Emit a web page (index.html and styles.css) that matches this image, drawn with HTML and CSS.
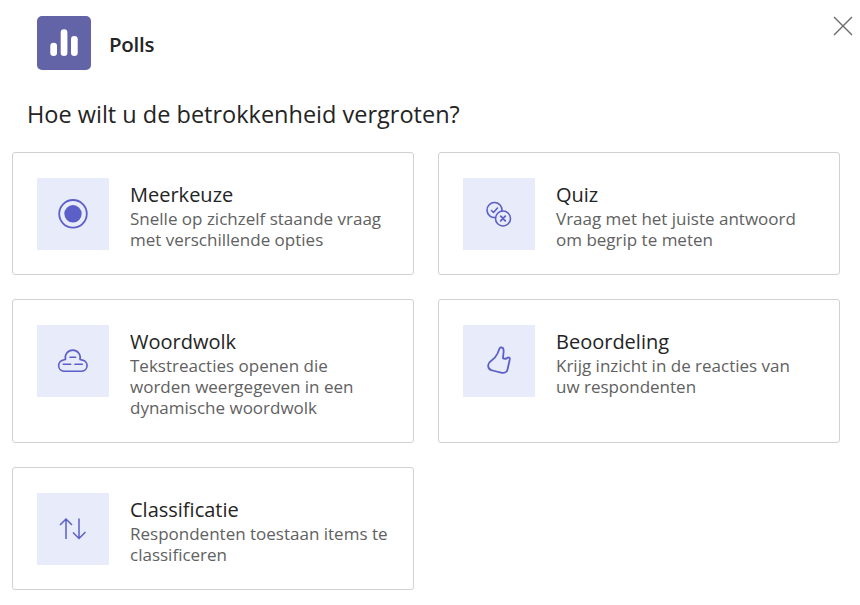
FILE: index.html
```html
<!DOCTYPE html>
<html lang="nl">
<head>
<meta charset="utf-8">
<title>Polls</title>
<link rel="stylesheet" href="styles.css">
</head>
<body>
<main class="dialog">
  <button class="close" aria-label="Sluiten">
    <svg width="20" height="20" viewBox="0 0 20 20"><path d="M1 1 19 19M19 1 1 19" stroke="#6b6b6b" stroke-width="1.4" fill="none"/></svg>
  </button>
  <header class="app">
    <div class="app-logo">
      <svg width="54" height="54" viewBox="0 0 54 54"><g fill="#fff"><rect x="13.300" y="26.700" width="6.700" height="13.300" rx="3.300"/><rect x="23.700" y="13.300" width="6.700" height="26.700" rx="3.300"/><rect x="34" y="20" width="6.700" height="20" rx="3.300"/></g></svg>
    </div>
    <span class="app-name">Polls</span>
  </header>
  <h1 class="heading">Hoe wilt u de betrokkenheid vergroten?</h1>
  <div class="grid">
    <article class="card">
      <div class="tile"><svg width="32" height="32" viewBox="0 0 32 32"><circle cx="16" cy="15.800" r="13.800" fill="none" stroke="#5b5fc7" stroke-width="1.800"/><circle cx="16" cy="15.800" r="8.700" fill="#5b5fc7"/></svg></div>
      <div class="copy"><h2 class="title">Meerkeuze</h2><p class="desc">Snelle op zichzelf staande vraag met verschillende opties</p></div>
    </article>
    <article class="card">
      <div class="tile"><svg width="32" height="32" viewBox="0 0 32 32" fill="none" stroke="#5b5fc7" stroke-width="1.600" stroke-linecap="round" stroke-linejoin="round"><path d="M12.570 19.430A7.500 7.500 0 1 1 18.930 13.070"/><path d="M8.500 12.500l2 2 4-4.500"/><circle cx="20" cy="20.500" r="7.500"/><path d="M17.700 18.200l4.600 4.600M22.300 18.200l-4.600 4.600" stroke-width="1.800"/></svg></div>
      <div class="copy"><h2 class="title">Quiz</h2><p class="desc">Vraag met het juiste antwoord om begrip te meten</p></div>
    </article>
    <article class="card">
      <div class="tile"><svg width="32" height="32" viewBox="0 0 32 32" fill="none" stroke="#5b5fc7" stroke-width="1.600" stroke-linecap="round" stroke-linejoin="round"><path d="M7 26.200H24.700a5.600 5.600 0 0 0 .800-11.100L23 14.500A7.500 7.500 0 1 0 8.500 14.500L6.200 15.100a5.600 5.600 0 0 0 .800 11.100Z"/><path d="M13 12.300h5.700M6.300 19.300h7.400M18 19.300h7.300"/></svg></div>
      <div class="copy"><h2 class="title">Woordwolk</h2><p class="desc">Tekstreacties openen die worden weergegeven in een dynamische woordwolk</p></div>
    </article>
    <article class="card">
      <div class="tile"><svg width="32" height="32" viewBox="0 0 32 32" fill="none" stroke="#5b5fc7" stroke-width="1.800" stroke-linecap="round" stroke-linejoin="round"><path d="M16.500 3.500C17.500 2 20 2 20.500 4.500C21 7 20 10 20 13.500C22 14 24 13.500 25 12.500C26 12 27 13 26.800 14.200L24.500 24.500C24 27 21.500 28.300 19 27.800L9.500 25.500C6.500 24.800 5 22.500 5.200 20C5.400 18 6.500 17 8 16C11 14 13 12 14.500 8.500Z"/></svg></div>
      <div class="copy"><h2 class="title">Beoordeling</h2><p class="desc">Krijg inzicht in de reacties van uw respondenten</p></div>
    </article>
    <article class="card">
      <div class="tile"><svg width="32" height="32" viewBox="0 0 32 32" fill="none" stroke="#5b5fc7" stroke-width="1.500"><path d="M9 26V6M3 12l6-6 6 6M22 5.500v20M16 19.500l6 6 6.500-6.500"/></svg></div>
      <div class="copy"><h2 class="title">Classificatie</h2><p class="desc">Respondenten toestaan items te classificeren</p></div>
    </article>
  </div>
</main>
</body>
</html>
```
FILE: styles.css
```css
* { box-sizing: border-box; }
html, body { margin: 0; padding: 0; }
body {
  width: 860px;
  height: 605px;
  overflow: hidden;
  background: #fff;
  color: #242424;
  font-family: "Open Sans", "Noto Sans", sans-serif;
}
.dialog { position: relative; padding: 16px 20px 0 12px; }
.close {
  position: absolute;
  top: 16px;
  right: 7px;
  width: 20px;
  height: 20px;
  padding: 0;
  border: 0;
  background: none;
  display: block;
}
.close svg { display: block; }
.app { display: flex; align-items: center; gap: 18px; padding-left: 25px; }
.app-logo {
  width: 54px;
  height: 54px;
  border-radius: 5px;
  background: #6264a7;
}
.app-logo svg { display: block; }
.app-name { padding-top: 2px; font-size: 20.500px; font-weight: 600; letter-spacing: -0.250px; }
.heading {
  margin: 29px 0 0 15px;
  font-size: 23.500px;
  line-height: 30px;
  font-weight: 500;
  letter-spacing: 0;
}
.grid {
  margin-top: 23px;
  display: grid;
  grid-template-columns: 402px 402px;
  gap: 24px;
  align-items: stretch;
}
.card {
  display: flex;
  gap: 21px;
  padding: 25px 24px 24px;
  background: #fff;
  border: 1px solid #d1d1d1;
  border-radius: 3px;
}
.tile {
  flex: none;
  width: 72px;
  height: 72px;
  background: #e8ebfa;
  display: flex;
  align-items: center;
  justify-content: center;
}
.tile svg { display: block; }
.copy { min-width: 0; }
.title {
  margin: 5px 0 0;
  font-size: 20px;
  line-height: 24px;
  font-weight: 500;
  letter-spacing: 0;
}
.desc {
  margin: 1px 0 0;
  font-size: 17px;
  line-height: 21px;
  color: #616161;
  letter-spacing: 0;
}
```
